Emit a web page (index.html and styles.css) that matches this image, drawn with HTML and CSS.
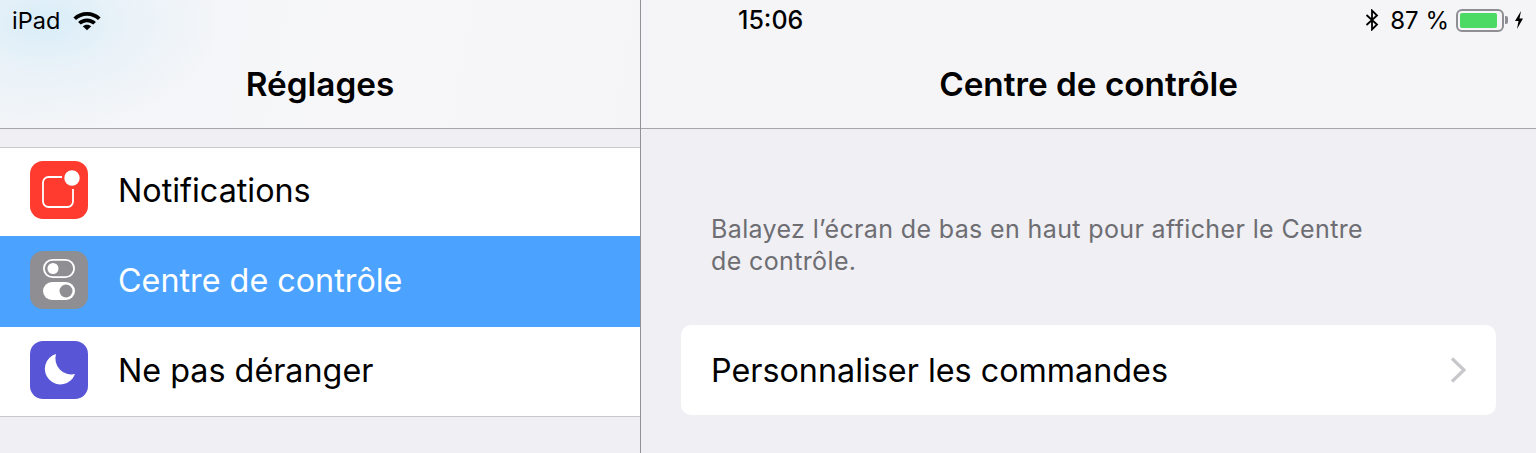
FILE: index.html
```html
<!DOCTYPE html>
<html lang="fr">
<head>
<meta charset="utf-8">
<title>Réglages</title>
<link rel="stylesheet" href="styles.css">
</head>
<body>
<div class="app">
  <aside class="side">
    <header class="head head-side">
      <div class="status status-left">
        <span>iPad</span>
        <svg class="wifi" width="30" height="22" viewBox="0 0 32 22"><path d="M16 2.500C10.300 2.500 5.300 4.700 1.500 8.200L4.300 11.100C7.400 8.300 11.500 6.500 16 6.500S24.600 8.300 27.700 11.100L30.500 8.200C26.700 4.700 21.700 2.500 16 2.500Z"/><path d="M16 9.300C12.300 9.300 9 10.700 6.500 13L9.300 15.900C11.100 14.300 13.400 13.300 16 13.300S20.900 14.300 22.700 15.900L25.500 13C23 10.700 19.700 9.300 16 9.300Z"/><path d="M16 16C14.200 16 12.700 16.600 11.500 17.700L16 22L20.500 17.700C19.300 16.600 17.800 16 16 16Z"/></svg>
      </div>
      <h1 class="title">Réglages</h1>
    </header>
    <ul class="list">
      <li class="row row-first">
        <span class="icon icon-red">
          <svg width="58" height="58" viewBox="0 0 58 58"><path d="M32 16H18.500A5.500 5.500 0 0 0 13 21.500V40.500A5.500 5.500 0 0 0 18.500 46H37.500A5.500 5.500 0 0 0 43 40.500V28" fill="none" stroke="#fff" stroke-width="1.800"/><circle cx="42" cy="17" r="7.700" fill="#fff"/></svg>
        </span>
        <span>Notifications</span>
      </li>
      <li class="row row-active">
        <span class="icon icon-grey">
          <svg width="58" height="58" viewBox="0 0 58 58"><rect x="13.900" y="8.900" width="30.200" height="17.200" rx="8.600" fill="none" stroke="#fff" stroke-width="1.800"/><circle cx="23" cy="17.500" r="5.500" fill="#fff"/><rect x="13" y="31" width="32" height="18" rx="9" fill="#fff"/><circle cx="36" cy="40" r="6.500" fill="#8e8e93"/></svg>
        </span>
        <span>Centre de contrôle</span>
      </li>
      <li class="row row-last">
        <span class="icon icon-purple">
          <svg width="58" height="58" viewBox="0 0 58 58"><path d="M26 13A15.500 15.500 0 1 0 45 33A16 16 0 0 1 26 13Z" fill="#fff"/></svg>
        </span>
        <span>Ne pas déranger</span>
      </li>
    </ul>
  </aside>
  <main class="main">
    <header class="head">
      <div class="status status-right">
        <span class="time">15:06</span>
        <div class="status-icons">
          <svg width="14" height="22" viewBox="0 0 14 22"><path d="M1.500 6L12 15.500L7 20.500V1.500L12 6.500L1.500 16" fill="none" stroke="#000" stroke-width="1.800"/></svg>
          <span class="percent">87 %</span>
          <span class="battery"><span class="battery-fill"></span></span>
          <span class="battery-cap"></span>
          <svg class="bolt" width="10" height="18" viewBox="0 0 10 18"><path d="M7 0L1 10H4.500L3 18L9 7.500H5.500Z"/></svg>
        </div>
      </div>
      <h1 class="title">Centre de contrôle</h1>
    </header>
    <section class="content">
      <p class="note">Balayez l’écran de bas en haut pour afficher le Centre de contrôle.</p>
      <div class="card">
        <span>Personnaliser les commandes</span>
        <svg width="16" height="26" viewBox="0 0 16 26"><path d="M2 1.500L14 13L2 24.500" fill="none" stroke="#c7c7cc" stroke-width="3.200"/></svg>
      </div>
    </section>
  </main>
</div>
</body>
</html>
```
FILE: styles.css
```css
* { box-sizing: border-box; }
html, body { margin: 0; height: 100%; overflow: hidden; }
body {
  background: #efeff4;
  color: #000;
  font-family: Inter, "Liberation Sans", sans-serif;
}
.app { display: flex; height: 453px; }
.side {
  width: 641px;
  flex: none;
  border-right: 1px solid #929296;
}
.main { flex: 1; min-width: 0; }
.head {
  height: 129px;
  background: #f5f5f8;
  border-bottom: 1px solid #a6a6aa;
  display: flex;
  flex-direction: column;
}
.head-side {
  background:
    radial-gradient(ellipse 190px 110px at 45px 22px, #d9edf8 0%, rgba(230,241,248,.7) 45%, rgba(245,245,248,0) 100%),
    linear-gradient(100deg, #f3f5f8, #f7f7f9 60%, #f5f5f8);
}
.status {
  height: 40px;
  display: flex;
  align-items: center;
  font-size: 23.500px;
  flex: none;
}
.status-left { padding-left: 12px; gap: 12px; }
.wifi { margin-top: -1px; }
.status-right { justify-content: space-between; padding: 0 12px 0 97px; }
.time { font-weight: 500; font-size: 25px; }
.status-icons { display: flex; align-items: center; }
.percent { margin-left: 11px; margin-right: 7px; font-size: 24px; }
.battery {
  width: 48px;
  height: 23px;
  border: 2px solid #8e8e93;
  border-radius: 6px;
  padding: 2px;
  display: flex;
}
.battery-fill { width: 37px; background: #4cd964; border-radius: 2px; }
.battery-cap {
  width: 3px;
  height: 8px;
  background: #8e8e93;
  border-radius: 0 2px 2px 0;
  margin-left: 1px;
  margin-right: 6px;
}
.title {
  margin: 24px 0 0;
  text-align: center;
  font-size: 33.300px;
  line-height: 40px;
  font-weight: 600;
}
.list {
  list-style: none;
  margin: 18px 0 0;
  padding: 0;
  background: #fff;
  border-top: 1px solid #c8c7cc;
  border-bottom: 1px solid #c8c7cc;
}
.row {
  display: flex;
  align-items: center;
  gap: 30px;
  padding-left: 30px;
  font-size: 32.300px;
}
.row-first { height: 88px; padding-bottom: 4px; }
.row-active { height: 91px; padding-bottom: 3px; background: #4ba3ff; color: #fff; }
.row-last { height: 89px; padding-bottom: 3px; }
.icon { width: 58px; height: 58px; border-radius: 13px; flex: none; display: block; }
.icon svg { display: block; }
.icon-red { background: #ff3b30; }
.icon-grey { background: #8e8e93; }
.icon-purple { background: #5856d6; }
.content { padding: 84px 40px 0; }
.note {
  margin: 0 0 48px 30px;
  width: 660px;
  font-size: 25px;
  letter-spacing: .37px;
  line-height: 32px;
  color: #6d6d72;
}
.card {
  height: 90px;
  background: #fff;
  border-radius: 10px;
  display: flex;
  align-items: center;
  justify-content: space-between;
  padding: 0 30px 0 30px;
  font-size: 32.300px;
}
```
